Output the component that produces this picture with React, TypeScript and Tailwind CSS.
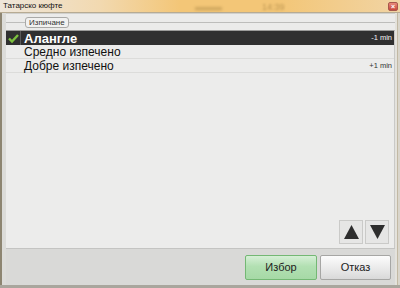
import React from "react";

export default function App() {
  const font = { fontFamily: '"Liberation Sans", Arial, sans-serif' };
  return (
    <div className="w-[400px] h-[288px] flex flex-col bg-[#8d8571] overflow-hidden" style={font}>
      {/* title bar */}
      <div className="relative h-[13px] flex items-center justify-between pl-[3px] pr-[2px] bg-[linear-gradient(90deg,#eee6da_0%,#f2d9b0_25%,#f3c677_45%,#f3c677_70%,#f1d4a4_100%)] border-b border-[#b7ab93]">
        <span className="text-[8px] leading-none text-[#111]">Татарско кюфте</span>
        <span className="absolute left-[195px] top-[1px] text-[9px] text-[#8a6a30] opacity-40 blur-[1.5px]">▬▬▬</span>
        <span className="absolute left-[262px] top-[1px] text-[9px] text-[#8a6a30] opacity-50 blur-[1px]">14:39</span>
        <div className="w-[10px] h-[9px] rounded-[2px] bg-[linear-gradient(#e88a7c,#c9473a)] border border-[#a8574c] flex items-center justify-center">
          <span className="text-[7px] leading-none text-white font-bold">×</span>
        </div>
      </div>

      {/* body */}
      <div className="flex-1 flex ml-[2px] bg-[#d6d4cd]">
        <div className="flex-1 flex flex-col bg-[#e7e7e5] border-l-[4px] border-[#dcdcd9]">
          {/* group header */}
          <div className="relative h-[17px] bg-[#ebebea] border-t border-[#d0d0cd]">
            <div className="absolute left-0 right-0 top-[8px] border-t border-[#bdbdbb]" />
            <div className="absolute left-[19px] top-[3px] h-[11px] px-[3px] flex items-center rounded-[3px] border border-[#a9a9a7] bg-[#f1f1f0]">
              <span className="text-[8px] leading-none text-[#333]">Изпичане</span>
            </div>
          </div>

          {/* list */}
          <div className="flex-1 flex flex-col bg-[#ececeb] border-t border-[#9c9c9a] border-r border-r-[#c9c9c7]">
            <div className="h-[14px] flex items-center bg-[#303030]">
              <div className="w-[15px] h-full flex items-center justify-center border-r border-[#5a5a5a]">
                <svg width="11" height="9" viewBox="0 0 11 9">
                  <path d="M1 4.5 L4 7.5 L10 1" fill="none" stroke="#7cc13e" strokeWidth="2.4" />
                </svg>
              </div>
              <span className="ml-[3px] text-[13px] font-bold leading-none text-white">Алангле</span>
              <span className="ml-auto mr-[2px] text-[7.5px] leading-none text-[#f4f4f4]">-1 min</span>
            </div>
            <div className="h-[14px] flex items-center border-b border-[#dcdcda]">
              <div className="w-[15px] h-full" />
              <span className="ml-[3px] text-[12px] leading-none text-[#111]">Средно изпечено</span>
            </div>
            <div className="h-[14px] flex items-center border-b border-[#dcdcda]">
              <div className="w-[15px] h-full" />
              <span className="ml-[3px] text-[12px] leading-none text-[#111]">Добре изпечено</span>
              <span className="ml-auto mr-[2px] text-[7.5px] leading-none text-[#333]">+1 min</span>
            </div>
            <div className="flex-1" />
            <div className="flex justify-end gap-[2px] pr-[5px] pb-[4px]">
              <div className="w-[24px] h-[24px] flex items-center justify-center bg-[#e6e6e5] border border-[#cacac8]">
                <svg width="15" height="14" viewBox="0 0 15 14">
                  <path d="M7.5 0 L15 14 L0 14 Z" fill="#2e2e2e" />
                </svg>
              </div>
              <div className="w-[24px] h-[24px] flex items-center justify-center bg-[#e6e6e5] border border-[#cacac8]">
                <svg width="15" height="14" viewBox="0 0 15 14">
                  <path d="M0 0 L15 0 L7.5 14 Z" fill="#2e2e2e" />
                </svg>
              </div>
            </div>
          </div>

          {/* bottom bar */}
          <div className="h-[37px] flex items-center justify-end gap-[3px] pr-[4px] bg-[#d9d9d7] border-t border-[#c4c4c2]">
            <button className="w-[72px] h-[25px] flex items-center justify-center rounded-[2px] border border-[#74b874] bg-[linear-gradient(#d6efd6_0%,#b2e0b2_45%,#a6d9a6_100%)]">
              <span className="text-[11px] text-[#222]">Избор</span>
            </button>
            <button className="w-[71px] h-[25px] flex items-center justify-center rounded-[2px] border border-[#a6a6a4] bg-[linear-gradient(#fcfcfc_0%,#ededed_45%,#d9d9d9_100%)]">
              <span className="text-[11px] text-[#222]">Отказ</span>
            </button>
          </div>
        </div>
        <div className="w-[5px] flex">
          <div className="w-[2px] bg-[#e4e2dc]" />
          <div className="w-[1px] bg-[#c2b9a4]" />
          <div className="w-[2px] bg-[#d9d5cb]" />
        </div>
      </div>
      <div className="h-[3px] bg-[#a9a69d]" />
    </div>
  );
}
